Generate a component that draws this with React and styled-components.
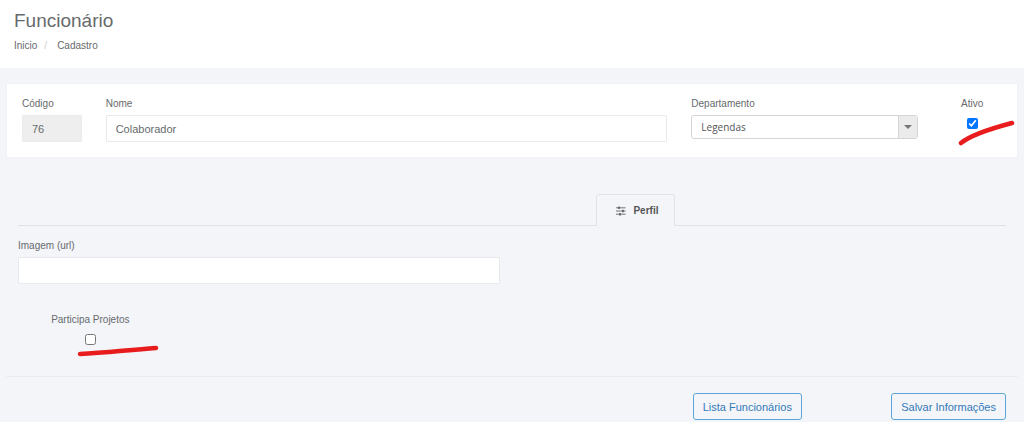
import React, { useState } from "react"
import styled, { createGlobalStyle } from "styled-components"

const GlobalStyle = createGlobalStyle`
  :root {
    --color-text: #676a6c;
    --color-background: #f3f5f9;
    --color-border: #e7eaec;
    --color-line: #e0e3e6;
    --color-primary: #337ab7;
    --color-mark: #e81c1c;
  }

  * {
    box-sizing: border-box;
  }

  body {
    margin: 0;
    background: #fff;
    color: var(--color-text);
    font-family: "Liberation Sans", Arial, sans-serif;
    font-size: 10px;
    line-height: 14px;
  }
`

const Page = styled.div`
  background: var(--color-background);
`

const Header = styled.header`
  padding: 9px 14px 15px;
  background: #fff;
`

const Title = styled.h1`
  margin: 0;
  font-size: 19px;
  font-weight: 400;
  line-height: 24px;
`

const Breadcrumb = styled.ol`
  display: flex;
  margin: 6px 0 0;
  padding: 0;
  list-style: none;

  li + li:before {
    content: "/";
    margin: 0 10px 0 7px;
    color: #ccc;
  }

  a {
    color: inherit;
    text-decoration: none;
  }
`

const Form = styled.form`
  padding: 15px 6px 2px;
`

const Row = styled.div`
  display: grid;
  grid-template-columns: repeat(12, 1fr);
  column-gap: 24px;
  padding: 0 12px;
`

const Card = styled.section`
  padding: 13px 3px 15px;
  background: #fff;
  border: 1px solid #eff1f5;
`

const Field = styled.div`
  position: relative;
  grid-column: ${props => props.$column};
  display: flex;
  flex-direction: column;
  align-items: ${props => (props.$center ? "center" : "stretch")};
`

const Label = styled.label`
  margin-bottom: 4px;
  white-space: nowrap;
`

const Input = styled.input`
  width: 100%;
  height: 27px;
  padding: 0 9px;
  border: 1px solid var(--color-border);
  border-radius: 1px;
  background: #fff;
  color: inherit;
  font-family: inherit;
  font-size: 11px;

  &:disabled {
    border-color: #ebebeb;
    background: #eee;
  }
`

const SelectBox = styled.div`
  display: flex;
  position: relative;
`

const Select = styled.select`
  width: 100%;
  height: 24px;
  padding: 0 28px 0 9px;
  appearance: none;
  border: 1px solid #d5d5d5;
  border-radius: 3px;
  background: #fff;
  color: #555;
  font-family: "Open Sans", sans-serif;
  font-size: 10px;
`

const SelectArrow = styled.span`
  position: absolute;
  top: 1px;
  right: 1px;
  bottom: 1px;
  width: 19px;
  display: flex;
  align-items: center;
  justify-content: center;
  border-left: 1px solid #d5d5d5;
  border-radius: 0 2px 2px 0;
  background: #ebebeb;
  pointer-events: none;

  &:before {
    content: "";
    border: 4px solid transparent;
    border-top-color: #777;
    border-bottom: 0;
  }
`

const Checkbox = styled.input`
  width: 11px;
  height: 11px;
  margin: 3px 0 0;
  accent-color: #0075ff;
`

const Mark = styled.svg`
  position: absolute;
  top: ${props => props.$top}px;
  left: calc(50% + ${props => props.$left}px);
  fill: none;
  stroke: var(--color-mark);
  stroke-width: 4.5;
  stroke-linecap: round;
  pointer-events: none;
`

const Tabs = styled.div`
  display: grid;
  grid-template-columns: 7fr auto 4fr;
  margin: 36px 12px 13px;
  border-bottom: 1px solid var(--color-line);
`

const Tab = styled.button`
  grid-column: 2;
  display: flex;
  align-items: center;
  gap: 7px;
  height: 32px;
  margin-bottom: -1px;
  padding: 0 16px 0 19px;
  border: 1px solid var(--color-line);
  border-bottom: 0;
  border-radius: 3px 3px 0 0;
  background: var(--color-background);
  color: #555;
  font-family: inherit;
  font-size: 10px;
  font-weight: 700;
`

const Profile = styled(Row)`
  row-gap: 29px;
`

const Divider = styled.hr`
  margin: 31px 0 16px;
  border: 0;
  border-top: 1px solid #e9ecf0;
`

const Action = styled.div`
  grid-column: ${props => props.$column};
  display: flex;
  justify-content: ${props => props.$align || "flex-start"};
`

const Button = styled.button`
  height: 27px;
  padding: 0 9px;
  border: 1px solid #5ba5d9;
  border-radius: 3px;
  background: transparent;
  color: var(--color-primary);
  font-family: inherit;
  font-size: 11px;
  white-space: nowrap;
`

const SlidersIcon = () => (
  <svg width="10" height="10" viewBox="0 0 10 10" fill="none" stroke="#666">
    <path d="M0 1.8H9.6M0 5H9.6M0 8.2H9.6" strokeWidth="0.9" />
    <path d="M3 0.6V3M7 3.8V6.2M4 7V9.4" strokeWidth="1.8" />
  </svg>
)

const App = () => {
  const [active, setActive] = useState(true)
  const [projects, setProjects] = useState(false)

  return (
    <Page>
      <GlobalStyle />
      <Header>
        <Title>Funcionário</Title>
        <nav>
          <Breadcrumb>
            <li>
              <a href="#inicio">Inicio</a>
            </li>
            <li>
              <a href="#cadastro">Cadastro</a>
            </li>
          </Breadcrumb>
        </nav>
      </Header>
      <Form onSubmit={e => e.preventDefault()}>
        <Card>
          <Row>
            <Field $column="span 1">
              <Label htmlFor="code">Código</Label>
              <Input id="code" type="text" defaultValue="76" disabled />
            </Field>
            <Field $column="span 7">
              <Label htmlFor="name">Nome</Label>
              <Input id="name" type="text" defaultValue="Colaborador" />
            </Field>
            <Field $column="span 3">
              <Label htmlFor="department">Departamento</Label>
              <SelectBox>
                <Select id="department">
                  <option>Legendas</option>
                </Select>
                <SelectArrow />
              </SelectBox>
            </Field>
            <Field $column="span 1" $center>
              <Label htmlFor="active">Ativo</Label>
              <Checkbox
                id="active"
                type="checkbox"
                checked={active}
                onChange={e => setActive(e.target.checked)}
              />
              <Mark $top={22} $left={-14} width="58" height="28">
                <path d="M3 24C14 15 35 9 54 4" />
              </Mark>
            </Field>
          </Row>
        </Card>
        <Tabs role="tablist">
          <Tab type="button" role="tab" aria-selected="true">
            <SlidersIcon />
            Perfil
          </Tab>
        </Tabs>
        <Profile>
          <Field $column="span 6">
            <Label htmlFor="image">Imagem (url)</Label>
            <Input id="image" type="text" />
          </Field>
          <Field $column="1 / span 2" $center>
            <Label htmlFor="projects">Participa Projetos</Label>
            <Checkbox
              id="projects"
              type="checkbox"
              checked={projects}
              onChange={e => setProjects(e.target.checked)}
            />
            <Mark $top={31} $left={-13} width="84" height="14">
              <path d="M3 10C28 9 50 6 79 4" />
            </Mark>
          </Field>
        </Profile>
        <Divider />
        <Row>
          <Action $column="9 / span 2">
            <Button type="button">Lista Funcionários</Button>
          </Action>
          <Action $column="11 / span 2" $align="flex-end">
            <Button type="submit">Salvar Informações</Button>
          </Action>
        </Row>
      </Form>
    </Page>
  )
}

export default App
